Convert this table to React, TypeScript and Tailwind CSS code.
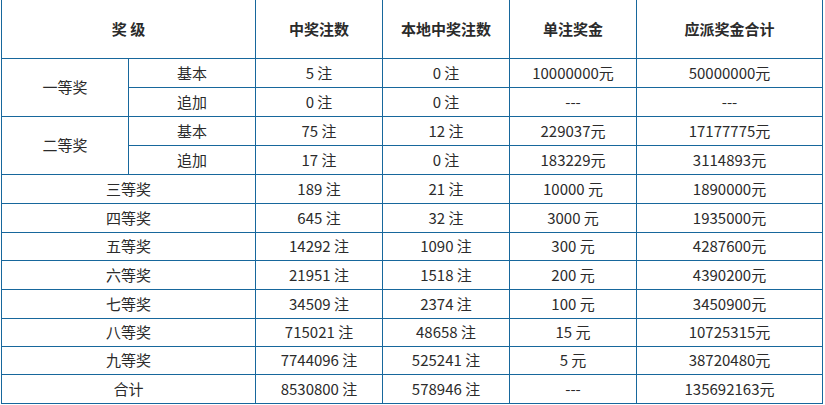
const headers = ["中奖注数", "本地中奖注数", "单注奖金", "应派奖金合计"];

type Row = { level: string; cells: string[] };

const splitRows: { level: string; sub: { name: string; cells: string[] }[] }[] = [
  {
    level: "一等奖",
    sub: [
      { name: "基本", cells: ["5 注", "0 注", "10000000元", "50000000元"] },
      { name: "追加", cells: ["0 注", "0 注", "---", "---"] },
    ],
  },
  {
    level: "二等奖",
    sub: [
      { name: "基本", cells: ["75 注", "12 注", "229037元", "17177775元"] },
      { name: "追加", cells: ["17 注", "0 注", "183229元", "3114893元"] },
    ],
  },
];

const rows: Row[] = [
  { level: "三等奖", cells: ["189 注", "21 注", "10000 元", "1890000元"] },
  { level: "四等奖", cells: ["645 注", "32 注", "3000 元", "1935000元"] },
  { level: "五等奖", cells: ["14292 注", "1090 注", "300 元", "4287600元"] },
  { level: "六等奖", cells: ["21951 注", "1518 注", "200 元", "4390200元"] },
  { level: "七等奖", cells: ["34509 注", "2374 注", "100 元", "3450900元"] },
  { level: "八等奖", cells: ["715021 注", "48658 注", "15 元", "10725315元"] },
  { level: "九等奖", cells: ["7744096 注", "525241 注", "5 元", "38720480元"] },
  { level: "合计", cells: ["8530800 注", "578946 注", "---", "135692163元"] },
];

const cell =
  "flex items-center justify-center border-r border-b border-[#17679c] whitespace-nowrap";

export default function App() {
  return (
    <div className="w-[825px] h-[405px] bg-white overflow-hidden pl-px">
      <div
        className="grid grid-cols-[127px_127px_127px_127px_127px_186px] grid-rows-[59px_29px_29px_29px_29px_29px_29px_28px_29px_29px_28px_28px_29px] border-l border-[#17679c] w-fit text-[15px] text-[#2b2b2b]"
        style={{ fontFamily: '"Noto Sans CJK SC", "Microsoft YaHei", sans-serif' }}
      >
        <div className={`${cell} col-span-2 font-bold`}>奖 级</div>
        {headers.map((h) => (
          <div className={`${cell} font-bold`} key={h}>
            {h}
          </div>
        ))}

        {splitRows.map((group) =>
          group.sub.map((s, i) => (
            <>
              {i === 0 && (
                <div className={`${cell} row-span-2`} key={group.level}>
                  {group.level}
                </div>
              )}
              <div className={cell} key={`${group.level}-${s.name}`}>
                {s.name}
              </div>
              {s.cells.map((c, j) => (
                <div className={cell} key={`${group.level}-${s.name}-${j}`}>
                  {c}
                </div>
              ))}
            </>
          )),
        )}

        {rows.map((r) => (
          <>
            <div className={`${cell} col-span-2`} key={r.level}>
              {r.level}
            </div>
            {r.cells.map((c, j) => (
              <div className={cell} key={`${r.level}-${j}`}>
                {c}
              </div>
            ))}
          </>
        ))}
      </div>
    </div>
  );
}
